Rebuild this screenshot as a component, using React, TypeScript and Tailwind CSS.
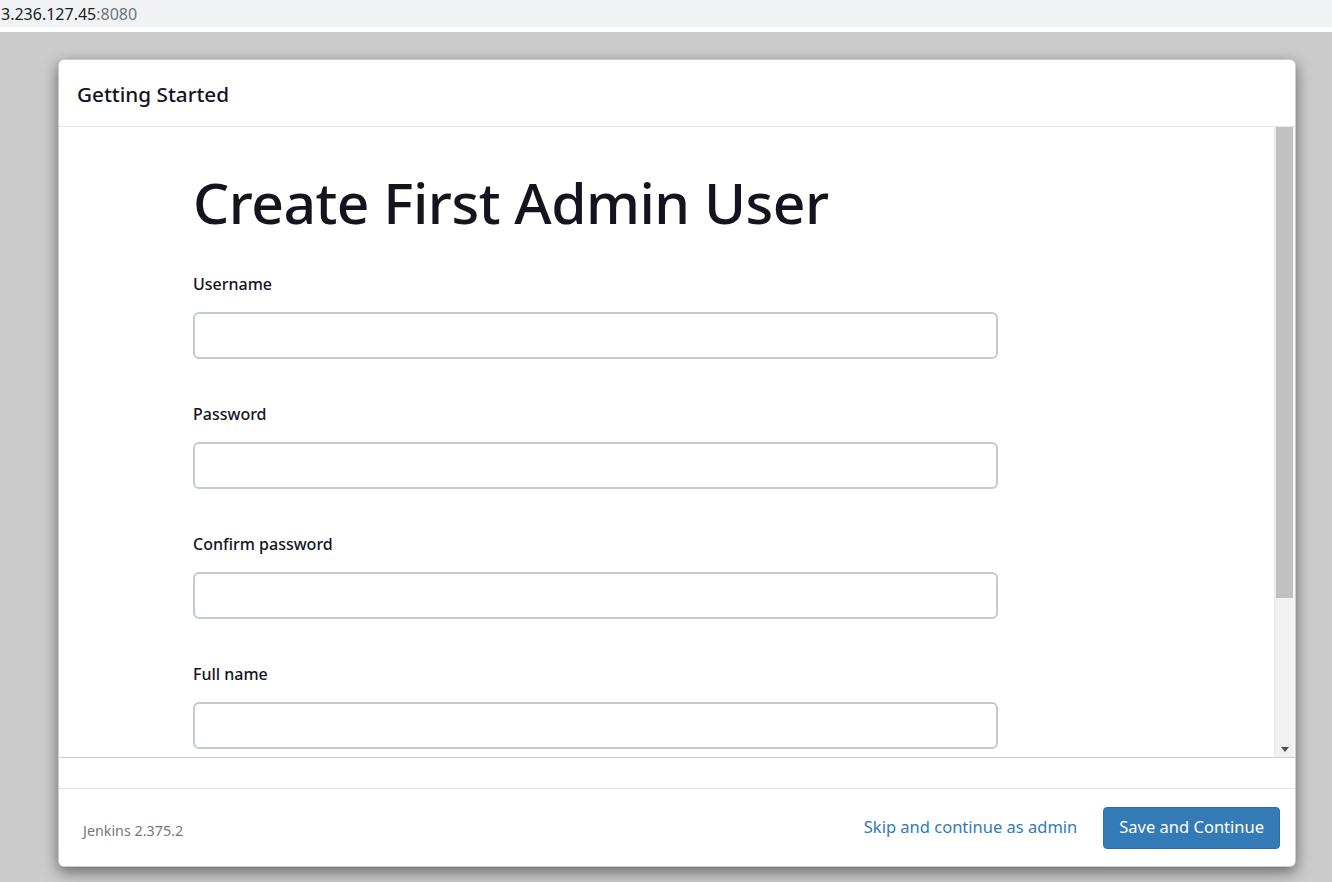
import React from "react";

const FIELDS = ["Username", "Password", "Confirm password", "Full name"];

function Field({ label }: { label: string }) {
  return (
    <div className="flex flex-col">
      <label className="text-[16px] font-medium text-[#14141f] leading-[20px] h-[20px]">{label}</label>
      <input
        type="text"
        className="mt-[18px] w-[805px] h-[47px] rounded-[6px] border-2 border-[#c3cbd0] bg-white outline-none"
      />
    </div>
  );
}

export default function App() {
  return (
    <div className="w-[1332px] h-[882px] flex flex-col overflow-hidden bg-[#cccccc]" style={{ fontFamily: '"Noto Sans", "Open Sans", sans-serif' }}>
      {/* Address strip */}
      <div className="h-[27px] bg-[#f0f2f4] flex items-center text-[16px] leading-none pl-[1px]">
        <span className="text-[#202124]">3.236.127.45</span>
        <span className="text-[#70757a]">:8080</span>
      </div>
      <div className="h-[5px] bg-white" />

      <div className="flex-1 pt-[27px] pl-[58px]">
        <div className="w-[1238px] h-[808px] bg-white rounded-[6px] border border-black/20 shadow-[0_5px_15px_rgba(0,0,0,0.5)] flex flex-col overflow-hidden">
          {/* Header */}
          <div className="h-[67px] border-b border-[#e5e5e5] flex items-center pl-[18px] pt-[3px] shrink-0">
            <h4 className="text-[20.7px] font-medium text-[#14141f]">Getting Started</h4>
          </div>

          {/* Body with scrollbar */}
          <div className="h-[631px] flex shrink-0 border-b border-[#cfcfcf]">
            <div className="flex-1 overflow-hidden pl-[134px] pt-[37px]">
              <h1 className="text-[57px] leading-[76px] font-medium text-[#14141f] tracking-[-0.5px]">Create First Admin User</h1>
              <div className="mt-[34px] flex flex-col gap-[45px]">
                {FIELDS.map((f) => (
                  <Field key={f} label={f} />
                ))}
              </div>
            </div>
            <div className="w-[21px] flex shrink-0">
              <div className="w-[2px] bg-[#ececec]" />
              <div className="w-[17px] bg-[#f1f1f1] flex flex-col">
                <div className="h-[471px] bg-[#c1c1c1]" />
                <div className="flex-1" />
                <div className="h-[16px] flex items-center justify-center">
                  <svg width="8" height="5" viewBox="0 0 8 5">
                    <path d="M0 0h8L4 5z" fill="#505050" />
                  </svg>
                </div>
              </div>
              <div className="w-[2px] bg-[#f6f6f6]" />
            </div>
          </div>
          <div className="h-[31px] border-b border-[#e5e5e5] shrink-0" />

          {/* Footer */}
          <div className="flex-1 flex items-center justify-between pl-[24px] pr-[15px]">
            <span className="text-[14.3px] text-[#777] mt-[6px]">Jenkins 2.375.2</span>
            <div className="flex items-center gap-[26px]">
              <a className="text-[16.5px] text-[#337ab7]">Skip and continue as admin</a>
              <button className="h-[42px] px-[15px] rounded-[4px] bg-[#337ab7] border border-[#2e6da4] text-white text-[16.5px]">
                Save and Continue
              </button>
            </div>
          </div>
        </div>
      </div>
    </div>
  );
}
